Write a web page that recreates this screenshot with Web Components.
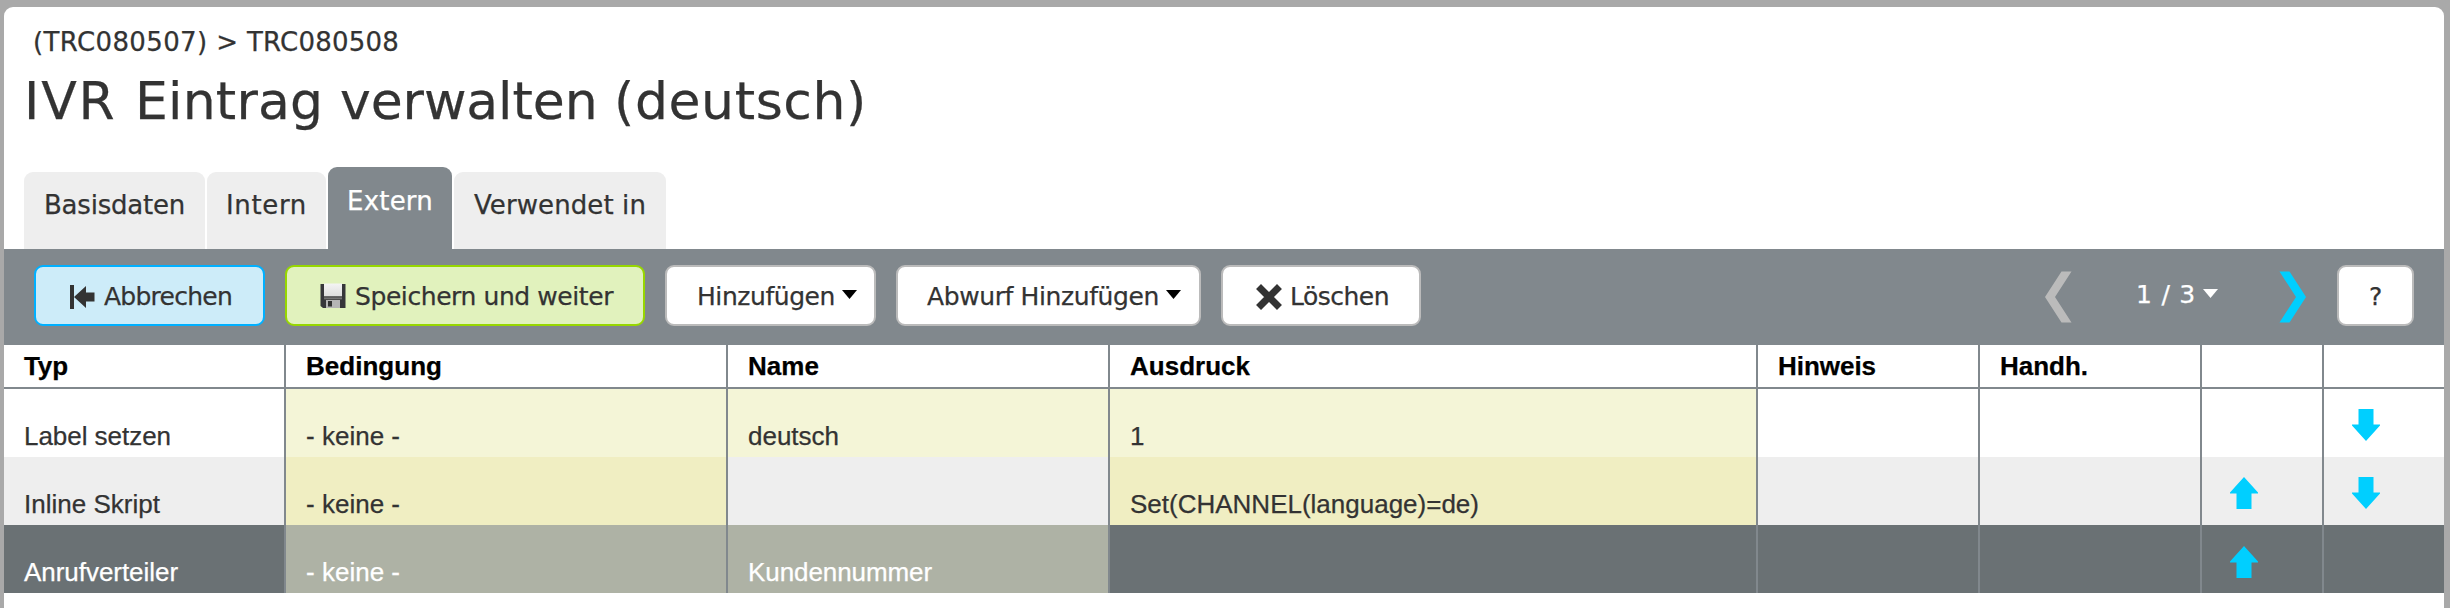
<!DOCTYPE html>
<html lang="de"><head><meta charset="utf-8"><title>IVR Eintrag verwalten</title>
<style>html,body{margin:0;height:100%;overflow:hidden;background:#a9a9a9}</style></head><body>
<ivr-page></ivr-page>
<script>
const define=(name,html,setup)=>customElements.define(name,class extends HTMLElement{
  connectedCallback(){
    if(this.shadowRoot)return;
    const t=document.createElement('template');t.innerHTML=html;
    this.attachShadow({mode:'open'}).appendChild(t.content.cloneNode(true));
    if(setup)setup(this,this.shadowRoot);
  }
});
// Text run with a fixed advance, spread by letter-spacing.
define('fit-text',`<style>:host{display:inline-block;white-space:pre}</style><slot></slot>`,(h)=>{
  const w=+h.getAttribute('w');if(!w)return;
  const n=h.textContent.length,cur=h.getBoundingClientRect().width;
  h.style.letterSpacing=((w-cur)/n)+'px';
});
const icons={
 back:'<svg width="26" height="26" viewBox="0 0 26 26"><path d="M1 1h4v24H1z M5 13L17 2v6.500H25.500v9H17V24z" fill="#333"/></svg>',
 save:'<svg width="26" height="26" viewBox="0 0 26 26"><defs><linearGradient id="g" x2="0" y2="1"><stop offset="0" stop-color="#f4f4f4"/><stop offset="1" stop-color="#ddd"/></linearGradient><linearGradient id="b" x2="0" y2="1"><stop offset="0" stop-color="#444"/><stop offset=".6" stop-color="#777"/><stop offset="1" stop-color="#333"/></linearGradient></defs><path d="M0.500 1h25v24H3l-2.500-2z" fill="#36363a"/><path d="M4 0.500h18v13H4z" fill="url(#g)"/><path d="M4 13.500h18v3.500H4z" fill="url(#b)"/><path d="M6 17h14v8H6z" fill="#b5b5b5"/><path d="M8 18h4v5.500H8z" fill="#333"/></svg>',
 del:'<svg width="26" height="26" viewBox="0 0 26 26"><path d="M5 5L21 21M21 5L5 21" stroke="#333" stroke-width="7" stroke-linecap="square" stroke-linejoin="round"/></svg>',
 up:'<svg width="30" height="34" viewBox="0 0 30 34"><path d="M15 1L29 16.500V17.500H22.500V33H7.500V17.500H1V16.500z" fill="#00cfff"/></svg>',
 down:'<svg width="30" height="34" viewBox="0 0 30 34"><path d="M15 33L29 17.500V16.500H22.500V1H7.500V16.500H1V17.500z" fill="#00cfff"/></svg>',
 caret:'<svg width="15" height="9" viewBox="0 0 15 9"><path d="M0 0h15L7.500 9z" fill="currentColor"/></svg>',
 prev:'<svg width="28" height="52" viewBox="0 0 28 52"><path d="M17.500 0.500H27.500L11 26L27.500 51.500H17.500L1 26z" fill="#bbb"/></svg>',
 next:'<svg width="28" height="52" viewBox="0 0 28 52"><path d="M10.500 0.500H0.500L17 26L0.500 51.500H10.500L27 26z" fill="#00cfff"/></svg>'
};
define('ui-icon','<style>:host{display:block;line-height:0}svg{display:block}</style>',(h,r)=>r.appendChild(Object.assign(document.createElement('span'),{innerHTML:icons[h.getAttribute('name')]})));
define('ui-tab',`<style>:host{display:block;box-sizing:border-box;height:77px;padding:15px 0 0 20px;border-radius:9px 9px 0 0;background:#eee;color:#333;font-size:26px;line-height:36px}
:host([active]){height:82px;padding-top:16px;background:#81888d;color:#fff}</style><slot></slot>`);
define('ui-button',`<style>:host{display:flex;box-sizing:border-box;height:61px;align-items:center;padding-top:2px;border:2px solid #bbb;border-radius:9px;background:#fff;color:#333;font-size:25px;line-height:34px}
:host([kind=cancel]){background:#cdecf9;border-color:#00b0ff}:host([kind=save]){background:#e1f2bd;border-color:#97d700}</style><slot></slot>`);
define('ui-cell',`<style>:host{display:flex;box-sizing:border-box;align-items:flex-end;padding:0 0 6px 20px;border-right:2px solid #81888d;line-height:30px}
:host(:last-child){border-right:0}
:host([mark]){background:var(--mark)}:host([pic]){align-items:flex-start;padding:var(--pic-top,19px) 0 0 27px}</style><slot></slot>`);
define('ui-row',`<style>:host{display:grid;grid-template-columns:282px 442px 382px 648px 222px 222px 122px 120px;height:68px;color:#333;--mark:#f4f5d7;background:#fff}
:host([kind=head]){height:44px;box-sizing:border-box;border-bottom:2px solid #81888d;font-weight:bold;color:#000}
:host([kind=odd]){background:#eee;--mark:#f0eec2}:host([kind=sel]){background:#6a7174;--mark:#aeb2a5;--pic-top:20px;color:#fff}</style><slot></slot>`);
define('ivr-page',`<style>
:host{display:block;box-sizing:border-box;height:608px;padding:7px 6px 0 4px;font-family:"DejaVu Sans",sans-serif;color:#333;-webkit-text-stroke:.25px currentColor}
main{background:#fff;height:601px;border-radius:9px 9px 0 0;display:flex;flex-direction:column}
header{height:160px;box-sizing:border-box;padding:18px 0 0 20px}
.crumb{font-size:26px;line-height:34px;padding-left:9px}
h1{margin:10px 0 0;font-weight:400;font-size:52px;line-height:64px}
nav{display:flex;align-items:flex-end;gap:2px;height:82px;padding-left:20px}
.bar{height:96px;box-sizing:border-box;background:#81888d;display:flex;align-items:flex-start;padding:16px 30px 0;gap:20px}
.pager{margin-left:auto;display:flex;align-items:center;color:#fff;font-size:25px;height:61px;padding-right:10px}
.table{font-family:"Liberation Sans",Arial,sans-serif;font-size:26px}
</style><main>
<header><div class="crumb"><fit-text w="214">(TRC080507) &gt; </fit-text><fit-text w="152">TRC080508</fit-text></div><h1><fit-text w="111">IVR </fit-text><fit-text w="205">Eintrag </fit-text><fit-text w="274">verwalten </fit-text><fit-text w="253">(deutsch)</fit-text></h1></header>
<nav><ui-tab style="width:181px"><fit-text w="141">Basisdaten</fit-text></ui-tab><ui-tab style="width:119px;padding-left:19px"><fit-text w="81">Intern</fit-text></ui-tab><ui-tab active style="width:124px;padding-left:19px"><fit-text w="86">Extern</fit-text></ui-tab><ui-tab style="width:212px"><fit-text w="172">Verwendet in</fit-text></ui-tab></nav>
<div class="bar">
<ui-button kind="cancel" style="width:231px;padding-left:33px"><ui-icon name="back"></ui-icon><fit-text w="128" style="margin-left:9px">Abbrechen</fit-text></ui-button>
<ui-button kind="save" style="width:360px;padding-left:33px"><ui-icon name="save" style="margin-top:-2px"></ui-icon><fit-text w="258" style="margin-left:9px">Speichern und weiter</fit-text></ui-button>
<ui-button style="width:211px;padding-left:30px"><fit-text w="138">Hinzufügen</fit-text><ui-icon name="caret" style="color:#000;margin:-4px 0 0 7px"></ui-icon></ui-button>
<ui-button style="width:305px;padding-left:29px"><fit-text w="232">Abwurf Hinzufügen</fit-text><ui-icon name="caret" style="color:#000;margin:-4px 0 0 7px"></ui-icon></ui-button>
<ui-button style="width:200px;padding-left:33px"><ui-icon name="del"></ui-icon><fit-text w="99" style="margin-left:8px">Löschen</fit-text></ui-button>
<div class="pager"><ui-icon name="prev" style="margin-top:2px"></ui-icon><fit-text w="60" style="margin:-2px 0 0 64px">1 / 3</fit-text><ui-icon name="caret" style="margin:-5px 0 0 7px"></ui-icon><ui-icon name="next" style="margin:2px 0 0 61px"></ui-icon></div>
<ui-button style="width:77px;padding-left:30px;">?</ui-button>
</div>
<div class="table">
<ui-row kind="head"><ui-cell><fit-text w="44">Typ</fit-text></ui-cell><ui-cell><fit-text w="136">Bedingung</fit-text></ui-cell><ui-cell><fit-text w="71">Name</fit-text></ui-cell><ui-cell><fit-text w="120">Ausdruck</fit-text></ui-cell><ui-cell><fit-text w="98">Hinweis</fit-text></ui-cell><ui-cell><fit-text w="88">Handh.</fit-text></ui-cell><ui-cell></ui-cell><ui-cell></ui-cell></ui-row>
<ui-row><ui-cell><fit-text w="147">Label setzen</fit-text></ui-cell><ui-cell mark><fit-text w="94">- keine -</fit-text></ui-cell><ui-cell mark><fit-text w="91">deutsch</fit-text></ui-cell><ui-cell mark>1</ui-cell><ui-cell></ui-cell><ui-cell></ui-cell><ui-cell></ui-cell><ui-cell pic><ui-icon name="down"></ui-icon></ui-cell></ui-row>
<ui-row kind="odd"><ui-cell><fit-text w="136">Inline Skript</fit-text></ui-cell><ui-cell mark><fit-text w="94">- keine -</fit-text></ui-cell><ui-cell></ui-cell><ui-cell mark><fit-text w="349">Set(CHANNEL(language)=de)</fit-text></ui-cell><ui-cell></ui-cell><ui-cell></ui-cell><ui-cell pic><ui-icon name="up"></ui-icon></ui-cell><ui-cell pic><ui-icon name="down"></ui-icon></ui-cell></ui-row>
<ui-row kind="sel"><ui-cell><fit-text w="154">Anrufverteiler</fit-text></ui-cell><ui-cell mark><fit-text w="94">- keine -</fit-text></ui-cell><ui-cell mark><fit-text w="184">Kundennummer</fit-text></ui-cell><ui-cell></ui-cell><ui-cell></ui-cell><ui-cell></ui-cell><ui-cell pic><ui-icon name="up"></ui-icon></ui-cell><ui-cell></ui-cell></ui-row>
</div></main>`);
</script></body></html>
